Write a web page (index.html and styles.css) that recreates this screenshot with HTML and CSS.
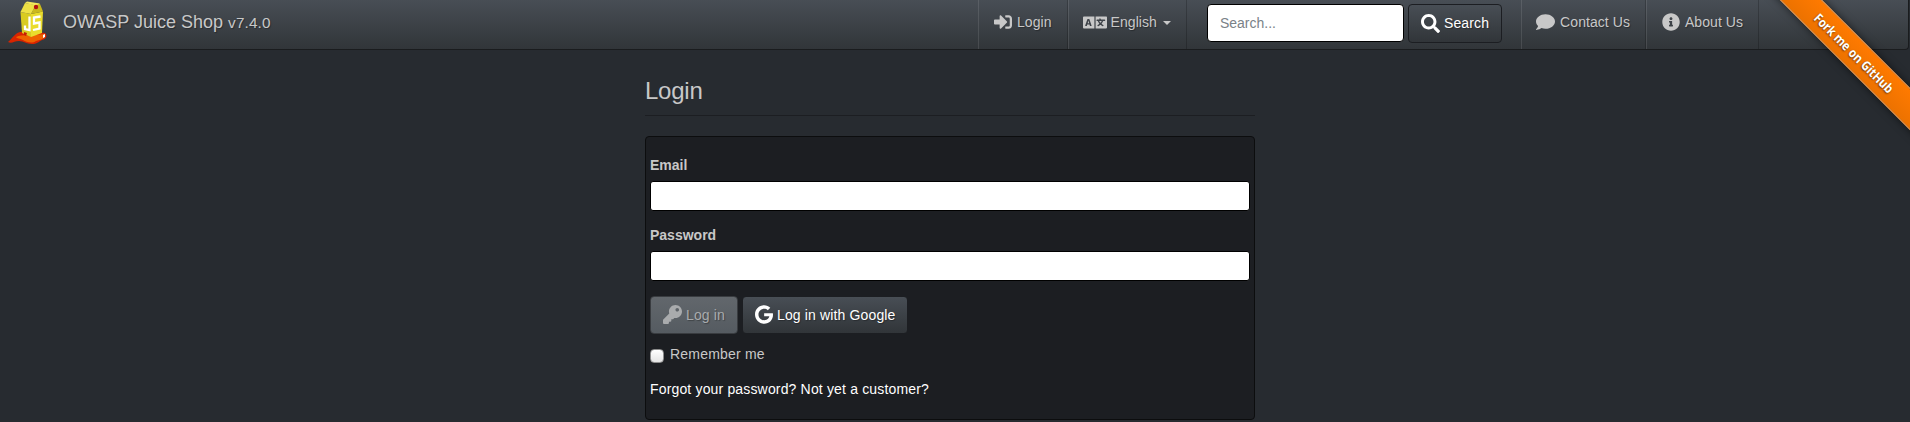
FILE: index.html
```html
<!DOCTYPE html>
<html lang="en">
<head>
<meta charset="utf-8">
<title>OWASP Juice Shop</title>
<link rel="stylesheet" href="styles.css">
</head>
<body>
<nav class="navbar">
  <a class="brand">
    <svg class="logo" width="40" height="46" viewBox="0 0 40 46">
      <path fill="#d92400" d="M1 42C6 38 7 34 13 32L22 31L38 33C41 36 39 39 35 40C31 42 30 44 25 44C19 44 17 41 12 41C7 41 5 44 1 42Z"/>
      <path fill="#ee6200" d="M9 37C16 34 23 36 38 34C39 38 34 40 29 41C25 44 19 42 16 40C13 38 10 39 9 37Z"/>
      <path fill="#d9cb21" d="M13.500 12L24 14V37L15 33Z"/>
      <path fill="#eadc2c" d="M24 14L36 11.500L35 33L24 37Z"/>
      <path fill="#eee044" d="M13.500 12L18 3L29 5L24 14Z"/>
      <path fill="#cbb91c" d="M24 14L29 4L33 4L36 11.500Z"/>
      <path fill="#f3e75b" d="M18 3L20 1.500L33 3.500L29 5.500Z"/>
      <circle cx="29" cy="7" r="2.200" fill="#b31212"/>
      <path fill="none" stroke="#fff" stroke-width="2.300" d="M22.500 16.500V30L18 29V25.500M33.500 16.500L27 17.500V23.500L32.500 22.500V28.500L26 30"/>
      <path fill="#fff" d="M36 35l2-1v3l-2 1z"/>
      <path fill="#c51b05" d="M17 32l3 1-1 3-2-1z"/>
    </svg>
    <span class="brand-name">OWASP Juice Shop <small>v7.4.0</small></span>
  </a>
  <ul class="nav nav-main">
    <li><a><svg class="icon" width="18" height="18" viewBox="0 0 512 512"><path d="M416 448h-84c-6.600 0-12-5.400-12-12v-40c0-6.600 5.400-12 12-12h84c17.700 0 32-14.300 32-32V160c0-17.700-14.300-32-32-32h-84c-6.600 0-12-5.400-12-12V76c0-6.600 5.400-12 12-12h84c53 0 96 43 96 96v192c0 53-43 96-96 96zm-47-209L201 71c-15-15-41-4.500-41 17v96H24c-13.300 0-24 10.700-24 24v96c0 13.300 10.700 24 24 24h136v96c0 21.500 26 32 41 17l168-168c9.300-9.400 9.300-24.600 0-34z"/></svg>Login</a></li>
    <li><a class="language"><svg class="icon" width="24" height="19" viewBox="0 0 640 512" preserveAspectRatio="none"><path fill-rule="evenodd" d="M24 96H304V416H24C10 416 0 405 0 392V120C0 107 10 96 24 96ZM116 167L59 336Q56 352 70 352H92Q101 352 104 344L113 312H173L183 344Q186 352 194 352H217Q232 350 228 336L171 167Q168 159 160 159H128Q119 159 116 167ZM144 203L163 274H125ZM336 96H616C629 96 640 107 640 120V392C640 405 629 416 616 416H336ZM464 152Q464 140 452 140H448Q436 140 436 152V176H372Q360 176 360 188V204Q360 216 372 216H395Q405 252 437 288Q415 307 389 321Q381 328 385 337L394 352Q400 361 410 356Q440 340 466 316Q492 340 522 356Q532 361 538 352L547 337Q551 328 543 321Q518 307 495 288Q525 254 538 216H580Q592 216 592 204V188Q592 176 580 176H476V152ZM434 216H498Q488 242 466 264Q444 242 434 216Z"/></svg>English<span class="caret"></span></a></li>
  </ul>
  <form class="search">
    <input class="search-input" type="text" placeholder="Search...">
    <button class="btn btn-search" type="button"><svg class="icon" width="19" height="19" viewBox="0 0 512 512"><path d="M505 442.700L405.300 343c-4.500-4.500-10.600-7-17-7H372c27.600-35.300 44-79.700 44-128C416 93.100 322.900 0 208 0S0 93.100 0 208s93.100 208 208 208c48.300 0 92.700-16.400 128-44v16.300c0 6.400 2.500 12.500 7 17l99.700 99.700c9.400 9.400 24.600 9.400 33.900 0l28.300-28.300c9.400-9.400 9.400-24.600.1-34zM208 336c-70.700 0-128-57.200-128-128 0-70.700 57.200-128 128-128 70.700 0 128 57.200 128 128 0 70.700-57.200 128-128 128z"/></svg>Search</button>
  </form>
  <ul class="nav">
    <li><a class="contact"><svg class="icon" width="19" height="18" viewBox="0 0 512 512" preserveAspectRatio="none"><path d="M256 32C114.600 32 0 125.100 0 240c0 49.600 21.400 95 57 130.700C44.500 421.100 2.700 466 2.200 466.500c-2.200 2.300-2.800 5.700-1.500 8.700S4.800 480 8 480c66.300 0 116-31.800 140.600-51.400 32.700 12.300 69 19.400 107.400 19.400 141.400 0 256-93.100 256-208S397.400 32 256 32z"/></svg>Contact Us</a></li>
    <li><a><svg class="icon" width="18" height="18" viewBox="0 0 512 512"><path d="M256 8C119 8 8 119.100 8 256c0 137 111 248 248 248s248-111 248-248C504 119.100 393 8 256 8zm0 110c23.200 0 42 18.800 42 42s-18.800 42-42 42-42-18.800-42-42 18.800-42 42-42zm56 254c0 6.600-5.400 12-12 12h-88c-6.600 0-12-5.400-12-12v-24c0-6.600 5.400-12 12-12h12v-64h-12c-6.600 0-12-5.400-12-12v-24c0-6.600 5.400-12 12-12h64c6.600 0 12 5.400 12 12v100h12c6.600 0 12 5.400 12 12z"/></svg>About Us</a></li>
  </ul>
</nav>
<div class="ribbon-wrap"><a class="ribbon"><span class="ribbon-text">Fork me on GitHub</span></a></div>
<main class="login">
  <h3 class="title">Login</h3>
  <form class="well">
    <label class="field-label" for="email">Email</label>
    <input class="field" id="email" type="text">
    <label class="field-label" for="password">Password</label>
    <input class="field" id="password" type="password">
    <div class="actions">
      <button class="btn btn-disabled" type="button"><svg class="icon" width="19" height="19" viewBox="0 0 512 512"><path d="M512 176c0 97.200-78.800 176-176 176-11.200 0-22.200-1.100-32.800-3.100l-24 27A24 24 0 0 1 261.200 384H224v40c0 13.300-10.700 24-24 24h-40v40c0 13.300-10.700 24-24 24H24c-13.300 0-24-10.700-24-24v-78.100c0-6.400 2.500-12.500 7-17l161.800-161.800C163 213.800 160 195.300 160 176 160 78.800 238.800 0 336 0c97.500 0 176 78.500 176 176zm-176-48c0 26.500 21.500 48 48 48s48-21.500 48-48-21.500-48-48-48-48 21.500-48 48z"/></svg>Log in</button>
      <button class="btn btn-google" type="button"><svg class="icon" width="18" height="19" viewBox="0 0 488 512"><path d="M488 261.800C488 403.300 391.100 504 248 504 110.800 504 0 393.200 0 256S110.800 8 248 8c66.800 0 123 24.500 166.300 64.900l-67.500 64.900C258.500 52.600 94.300 116.600 94.300 256c0 86.500 69.100 156.600 153.700 156.600 98.200 0 135-70.400 140.800-106.900H248v-85.300h236.100c2.300 12.700 3.900 24.900 3.900 41.400z"/></svg>Log in with Google</button>
    </div>
    <label class="remember"><input class="check" type="checkbox"><span>Remember me</span></label>
    <div class="links"><a>Forgot your password?</a> <a>Not yet a customer?</a></div>
  </form>
</main>
</body>
</html>
```
FILE: styles.css
```css
* { box-sizing: border-box; }
body {
  margin: 0;
  height: 422px;
  overflow: hidden;
  background: #272b30;
  color: #c8c8c8;
  font: 14px/20px "Liberation Sans", Arial, sans-serif;
}
.navbar {
  display: flex;
  height: 50px;
  width: 1909px;
  background: linear-gradient(#484e55, #3a3f44 60%, #313539);
  border: 1px solid #1a1c1e;
  border-width: 0 1px 1px 0;
  border-radius: 0 0 4px 0;
  text-shadow: 1px 1px 1px rgba(0, 0, 0, .3);
}
.brand { display: flex; width: 978px; padding-left: 7px; font-size: 18px; }
.logo { flex: none; margin-right: 16px; }
.brand-name { padding-top: 12px; }
.brand-name small { font-size: 15.3px; letter-spacing: .15px; }
.nav { display: flex; margin: 0; padding: 0; list-style: none; }
.nav a {
  display: flex;
  height: 49px;
  padding: 12px 15px 0;
  border-left: 1px solid rgba(255, 255, 255, .1);
  border-right: 1px solid rgba(0, 0, 0, .2);
  letter-spacing: .06px;
}
.icon { flex: none; margin: 1px 4px 0 0; fill: currentColor; }
.nav .icon { margin-right: 5px; }
.nav .language .icon { margin-right: 4px; }
.nav .language { padding: 12px 15px 0 14px; }
.nav .contact { padding-left: 14px; }
.caret {
  margin: 9px 0 0 6px;
  width: 8px;
  height: 4px;
  border: 4px solid transparent;
  border-top-color: currentColor;
  border-bottom: 0;
}
.search { display: flex; gap: 4px; padding: 4px 19px 0 20px; align-items: flex-start; }
.search-input {
  width: 197px;
  height: 38px;
  padding: 0 12px;
  border: 1px solid #000;
  border-radius: 4px;
  background: #fff;
  font: inherit;
}
.search-input::placeholder { color: #7a8288; }
.btn {
  display: flex;
  height: 38px;
  padding: 8px 12px;
  border: 1px solid #1c1e22;
  border-radius: 4px;
  background: linear-gradient(#484e55, #3a3f44 60%, #313539);
  color: #fff;
  font: inherit;
  letter-spacing: .14px;
  text-shadow: 1px 1px 1px rgba(0, 0, 0, .3);
}
.btn .icon { margin-top: 0; }
.btn-search { height: 39px; }
.btn-search .icon { margin-top: 1px; }
.btn-google { padding-right: 11px; }
.btn-disabled {
  background: linear-gradient(#62676c, #555b61);
  border-color: #393c40;
  color: #a9abad;
}
.login { width: 610px; margin-left: 645px; }
.title {
  margin: -1px 0 20px;
  padding-top: 28px;
  height: 67px;
  border-bottom: 1px solid #1c1e22;
  font-size: 24px;
  line-height: 28px;
  font-weight: 400;
  letter-spacing: -.25px;
}
.well {
  height: 284px;
  margin: 0;
  padding: 18px 4px 0;
  border: 1px solid #0c0d0e;
  border-radius: 4px;
  background: #1c1e22;
}
.field-label { display: block; margin-bottom: 6px; font-weight: 700; }
.field {
  display: block;
  width: 100%;
  height: 30px;
  margin-bottom: 14px;
  border: 1px solid #000;
  border-radius: 3px;
  background: #fff;
}
.actions { display: flex; gap: 4px; padding-top: 1px; }
.remember { display: flex; margin-top: 10px; letter-spacing: .2px; }
.check {
  appearance: none;
  width: 14px;
  height: 14px;
  margin: 5px 6px 0 0;
  border: 1px solid #8c8c8c;
  border-radius: 4px;
  background: linear-gradient(#fff, #e4e4e4);
}
.links { margin-top: 15px; color: #fff; letter-spacing: .16px; }
.ribbon-wrap {
  position: absolute;
  top: 0;
  right: 0;
  width: 149px;
  height: 149px;
  overflow: hidden;
}
.ribbon {
  position: absolute;
  top: 38px;
  left: -17px;
  width: 220px;
  height: 30px;
  border: 1px solid #ffa04a;
  border-width: 1px 0;
  background: linear-gradient(#ff7a00, #ec7200);
  box-shadow: 0 0 8px rgba(0, 0, 0, .6);
  transform: rotate(45deg);
  text-align: center;
}
.ribbon-text {
  display: inline-block;
  color: #fff;
  font: 700 13px/28px "Open Sans", sans-serif;
  text-shadow: 0 1px 2px rgba(0, 0, 0, .6);
  transform: scaleX(.87);
}
```
